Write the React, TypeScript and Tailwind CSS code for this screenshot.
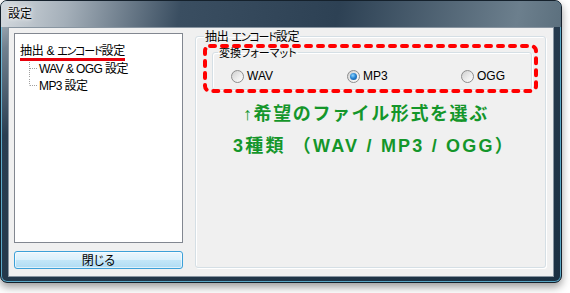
import React from 'react';

const ui = "font-['Liberation_Sans','Noto_Sans_CJK_JP',sans-serif]";
const kana = "font-['Noto_Sans_CJK_JP',sans-serif] [font-feature-settings:'palt'_1]";

function TreeLine({ last }: { last?: boolean }) {
  return (
    <svg width="20" height="17" className="shrink-0">
      <line x1="10.5" y1="2" x2="10.5" y2={last ? 8.5 : 17} stroke="#a0a0a0" strokeDasharray="1 1" />
      <line x1="11" y1="8.5" x2="19" y2="8.5" stroke="#a0a0a0" strokeDasharray="1 1" />
    </svg>
  );
}

function Radio({ label, checked, width }: { label: string; checked?: boolean; width: string }) {
  return (
    <div className={`flex items-center gap-[3px] ${width}`}>
      <div className="w-[13px] h-[13px] rounded-full border border-[#8d8d8d] bg-[linear-gradient(135deg,#cfcfcf_0%,#ececec_55%,#ffffff_100%)] flex items-center justify-center">
        {checked && (
          <div className="w-[7px] h-[7px] rounded-full bg-[radial-gradient(circle_at_40%_35%,#8fd6ff_0%,#2a86d4_45%,#0d4a8f_100%)]" />
        )}
      </div>
      <span className="text-[12px] leading-[14px] text-black">{label}</span>
    </div>
  );
}

export default function App() {
  return (
    <div className={`min-h-screen bg-white ${ui}`}>
      <div className="w-[562px] h-[283px] rounded-[7px] border border-[#15212c] flex flex-col shadow-[0_4px_8px_rgba(0,0,0,0.4),inset_0_0_0_1px_rgba(110,205,240,0.75)] bg-[linear-gradient(160deg,#c2c9d0_0%,#71818f_10%,#2a3e51_28%,#1b3042_100%)] overflow-hidden">
        {/* title bar */}
        <div className="h-[26px] shrink-0 flex items-center pl-[7px] bg-[linear-gradient(100deg,#d3d9de_0%,#a4afb9_12%,#3a4e61_32%,#2d4154_60%,#6c7f8d_92%,#5c707e_100%)]">
          <span className="text-[12px] leading-[14px] text-black [text-shadow:0_0_6px_#fff,0_0_3px_#fff]">設定</span>
        </div>

        {/* client area */}
        <div className="flex-1 mx-[7px] mb-[5px] bg-[#f0f0f0] border border-[#8895a1] flex items-start pl-[5px] pt-[5px]">
          {/* left column */}
          <div className="w-[169px] flex flex-col gap-[8px]">
            <div className="h-[210px] bg-white border border-[#828790] pl-[5px] pt-[4px]">
              <span className="inline-block text-[12px] leading-[13px] text-black border-b-[3px] border-[#e8000b] tracking-[-0.3px]">
                抽出 &amp; <span className={`${kana} text-[11px] tracking-[-1.2px]`}>エンコード</span>設定
              </span>
              <div className="-mt-[2px] -ml-[1px]">
                <div className="flex items-center h-[17px]">
                  <TreeLine />
                  <span className="text-[12px] leading-[14px] text-black tracking-[-0.6px]">WAV &amp; OGG 設定</span>
                </div>
                <div className="flex items-center h-[17px]">
                  <TreeLine last />
                  <span className="text-[12px] leading-[14px] text-black tracking-[-0.6px]">MP3 設定</span>
                </div>
              </div>
            </div>
            <button className="h-[18px] rounded-[3px] border border-[#3ca0d8] bg-[linear-gradient(180deg,#eaf6fd_0%,#d9f0fc_50%,#c3e6f8_50%,#b0dcf3_100%)] shadow-[inset_0_0_0_1px_rgba(255,255,255,0.6)] flex items-center justify-center">
              <span className="text-[12px] leading-[14px] text-black">閉<span className={kana}>じる</span></span>
            </button>
          </div>

          {/* right group */}
          <fieldset className="ml-[12px] -mt-[4px] w-[351px] h-[239px] border border-[#d5dfe5] rounded-[3px] pl-[7px] pr-[6px] shadow-[1px_1px_0_#fff,inset_1px_1px_0_#fff]">
            <legend className="ml-[1px] px-[1px] text-[12px] leading-[14px] text-black tracking-[-0.3px]">
              抽出 <span className={`${kana} text-[11px] tracking-[-1.2px]`}>エンコード</span>設定
            </legend>

            <div className="relative h-[49px] pl-[9px] pr-[7px] pt-[2px]">
              <fieldset className="h-[44px] border border-[#d5dfe5] rounded-[3px] shadow-[1px_1px_0_#fff,inset_1px_1px_0_#fff]">
                <legend className="ml-[5px] px-[1px] text-[11px] leading-[12px] text-black">
                  変換<span className={kana}>フォーマット</span>
                </legend>
                <div className="flex items-center pl-[18px] pt-[10px]">
                  <Radio label="WAV" width="w-[116px]" />
                  <Radio label="MP3" checked width="w-[114px]" />
                  <Radio label="OGG" width="w-[60px]" />
                </div>
              </fieldset>
              <svg width="335" height="49" className="absolute left-0 top-0 pointer-events-none">
                <rect x="2" y="2" width="331" height="45" rx="5" fill="none" stroke="#ff0000" strokeWidth="4" strokeLinecap="round" strokeDasharray="5 7" />
              </svg>
            </div>

            <div className="mt-[11px] flex flex-col gap-[12px] font-bold text-[#14962a] text-[18px] leading-[20px]">
              <div className="pl-[40px] tracking-[1.6px]">↑希望のファイル形式を選ぶ</div>
              <div className="pl-[30px] tracking-[2.2px]">3種類 （WAV / MP3 / OGG）</div>
            </div>
          </fieldset>
        </div>
      </div>
    </div>
  );
}
